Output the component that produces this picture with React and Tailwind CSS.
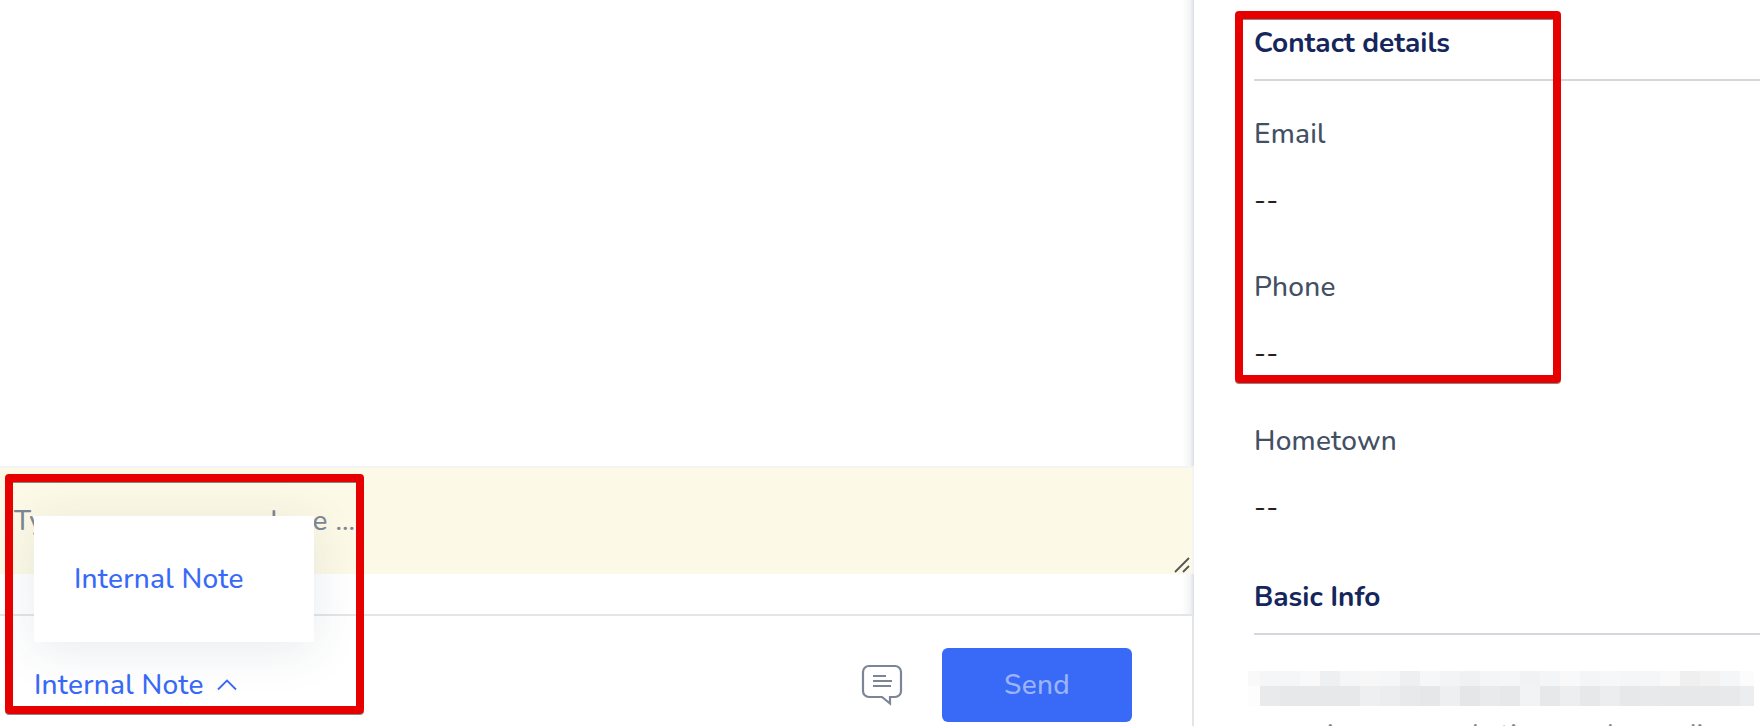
import React from 'react';

const contactFields = [
    { label: 'Email', value: '--' },
    { label: 'Phone', value: '--' },
    { label: 'Hometown', value: '--' }
];

const redactedTop = [
    '#f9f9f9', '#f5f6f7', '#f5f6f7', '#f9f9fa', '#eeeff0', '#f5f6f7', '#f7f7f8', '#f5f6f7',
    '#eeeff0', '#f6f7f8', '#f3f4f5', '#f0f1f2', '#f4f5f6', '#f5f6f7', '#f1f2f3',
    '#f4f5f6', '#f9f9f9', '#f4f5f6', '#f6f7f8', '#f5f6f7', '#f5f6f7', '#f9f9f9', '#efeff0',
    '#f2f2f3', '#f5f6f7', '#fcfcfc'
];

const redactedBottom = [
    '#fdfdfd', '#e9eaeb', '#e7e8e9', '#e7e8e9', '#e7e8e9', '#e7e8e9', '#eeeff0', '#ecedee',
    '#e8e9ea', '#e6e7e8', '#eeeff0', '#e5e6e7', '#e9eaeb', '#e7e8e9', '#f2f3f4',
    '#e7e8e9', '#edeeef', '#e7e8e9', '#ecedee', '#e7e8e9', '#e8e9ea', '#e7e8e9', '#e7e8e9',
    '#e7e8e9', '#e8e9ea', '#ecedee'
];

const RedactedRow = ({ cells, className }) => (
    <div className={`flex ${className}`}>
        {cells.map((color, i) => (
            <div
                key={i}
                className="w-5 shrink-0 first:w-3 last:w-3.5"
                style={{ backgroundColor: color }}
            />
        ))}
    </div>
);

const NoteIcon = () => (
    <svg width="42" height="42" viewBox="0 0 42 42" fill="none" stroke="#7b8595" strokeWidth="2.2">
        <path d="M8 2H34a6 6 0 0 1 6 6V27a6 6 0 0 1-6 6H29V39.5L21 33H8a6 6 0 0 1-6-6V8a6 6 0 0 1 6-6Z" />
        <path d="M12 12H25M12 17H31M12 22H30" />
    </svg>
);

const Composer = () => (
    <div className="relative">
        <div className="relative h-[108px] border-t-2 border-r-2 border-[#f4f4f7] bg-[#fcf9e6] pl-3.5 pt-[35px] text-[28px] leading-9 text-[#7f8794]">
            <span className="tracking-[0.3px]">Type your message here </span>
            <span>...</span>
            <svg className="absolute bottom-px right-px" width="17" height="16" viewBox="0 0 17 16" stroke="#555" strokeWidth="1.8">
                <path d="M1 15L15 1M9 15L15 9" />
            </svg>
        </div>
        <div className="h-10 bg-[linear-gradient(to_left,#dcdfe3,#f4f5f7_4px,#fff_12px)]" />
        <div className="flex h-28 items-start border-t-2 border-r-2 border-[#e4e5e7] pl-[34px] pr-[60px] pt-8">
            <button className="mt-[19px] flex items-center text-[28px] leading-9 font-medium text-[#386af7]">
                <span className="tracking-[0.26px]">Internal Note</span>
                <svg className="ml-[13px]" width="20" height="12" viewBox="0 0 20 12" fill="none" stroke="#386af7" strokeWidth="1.8">
                    <path d="M1 10.5L10 1.5L19 10.5" />
                </svg>
            </button>
            <div className="ml-auto mt-4 mr-[39px]">
                <NoteIcon />
            </div>
            <button className="h-[74px] w-[190px] rounded-md bg-[#386af7] text-[28px] font-medium tracking-[0.3px] text-[#9bb4fb]">Send</button>
        </div>
        <div className="absolute left-[34px] top-[50px] flex h-[126px] w-[280px] items-center bg-white pl-10 text-[28px] font-medium text-[#386af7] shadow-[0_8px_48px_rgba(40,60,90,0.1)]">
            <span className="tracking-[0.26px]">Internal Note</span>
        </div>
    </div>
);

const SectionTitle = ({ children }) => (
    <h2 className="border-b-2 border-[#d5d7df] pb-[18px] text-[28px] leading-9 font-bold text-[#15265c]">{children}</h2>
);

const App = () => (
    <div className="relative flex h-[726px] w-[1760px] overflow-hidden bg-white font-[Nunito,Lato,sans-serif] font-medium">
        <main className="flex w-[1194px] shrink-0 flex-col">
            <div className="h-[466px] bg-[linear-gradient(to_left,#dcdfe3,#f4f5f7_4px,#fff_12px)]" />
            <Composer />
        </main>

        <aside className="flex flex-1 flex-col pl-[60px]">
            <div className="pt-[25px]">
                <SectionTitle>Contact details</SectionTitle>
            </div>
            <div className="pt-[34.6px]">
                {contactFields.map((field) => (
                    <div key={field.label} className="h-[153.5px] text-[28px] leading-9 tracking-[0.24px]">
                        <div className="text-[#435064]">{field.label}</div>
                        <div className="mt-[30px] text-[#222]">{field.value}</div>
                    </div>
                ))}
            </div>
            <div className="mt-[2.9px]">
                <SectionTitle>Basic Info</SectionTitle>
            </div>
            <div className="-ml-1.5 mt-9">
                <RedactedRow cells={redactedTop} className="h-[15px]" />
                <RedactedRow cells={redactedBottom} className="h-5" />
            </div>
            {/* next line scrolls out of the panel, only its ascenders show */}
            <div className="mt-[11px] flex text-[28px] leading-9 text-[#7f8794]">
                <span className="ml-[73px] w-[145px]">i</span>
                <span className="w-[28px]">l</span>
                <span className="w-[107px]">ti</span>
                <span className="w-[73px]">l</span>
                <span>di</span>
            </div>
        </aside>

        <div className="absolute left-[5px] top-[474px] h-[240px] w-[359px] rounded border-8 border-[#e60000] shadow-[0_1px_0_#0007,inset_0_1px_0_#0007]" />
        <div className="absolute left-[1235px] top-[11px] h-[372px] w-[326px] rounded border-8 border-[#e60000] shadow-[0_1px_0_#0007,inset_0_1px_0_#0007]" />
    </div>
);

export default App;
